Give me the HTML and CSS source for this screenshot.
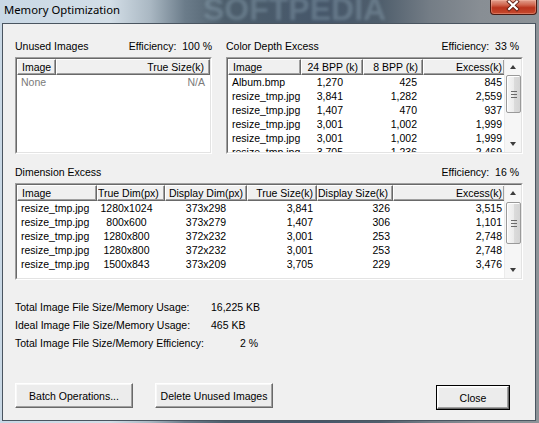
FILE: index.html
```html
<!DOCTYPE html>
<html lang="en">
<head>
    <meta charset="UTF-8">
    <title>Memory Optimization</title>
    <link rel="stylesheet" href="styles.css">
</head>
<body>
    <div class="window">
        <div class="titlebar">
            <span class="title">Memory Optimization</span>
            <span class="watermark">SOFTPEDIA</span>
            <button class="close-x" title="Close">
                <svg width="47" height="15" viewBox="0 0 47 15">
                    <path d="M19.5 1.5 L27.5 9 M27.5 1.5 L19.5 9" stroke="#5a1a10" stroke-width="4" stroke-linecap="square"/>
                    <path d="M19.5 1.5 L27.5 9 M27.5 1.5 L19.5 9" stroke="#fff" stroke-width="2.2" stroke-linecap="square"/>
                </svg>
            </button>
        </div>

        <div class="client">
            <div class="top-row">
                <section class="panel panel-unused">
                    <div class="panel-head">
                        <span>Unused Images</span>
                        <span>Efficiency:&nbsp; 100 %</span>
                    </div>
                    <div class="list list-top">
                        <div class="list-inner">
                            <div class="table">
                                <div class="row head cols-unused">
                                    <div class="hc pl5">Image</div>
                                    <div class="hc r pr5">True Size(k)</div>
                                </div>
                                <div class="row cols-unused muted">
                                    <div class="pl4">None</div>
                                    <div class="r pr5">N/A</div>
                                </div>
                            </div>
                        </div>
                    </div>
                </section>

                <section class="panel panel-color">
                    <div class="panel-head pad-r">
                        <span>Color Depth Excess</span>
                        <span>Efficiency:&nbsp; 33 %</span>
                    </div>
                    <div class="list list-top">
                        <div class="list-inner">
                            <div class="table">
                                <div class="row head cols-color">
                                    <div class="hc pl5">Image</div>
                                    <div class="hc r pr4">24 BPP (k)</div>
                                    <div class="hc r pr4">8 BPP (k)</div>
                                    <div class="hc r pr2">Excess(k)</div>
                                </div>
                                <div class="row cols-color">
                                    <div class="pl4">Album.bmp</div><div class="r pr20">1,270</div><div class="r pr6">425</div><div class="r pr3">845</div>
                                </div>
                                <div class="row cols-color">
                                    <div class="pl4">resize_tmp.jpg</div><div class="r pr20">3,841</div><div class="r pr6">1,282</div><div class="r pr3">2,559</div>
                                </div>
                                <div class="row cols-color">
                                    <div class="pl4">resize_tmp.jpg</div><div class="r pr20">1,407</div><div class="r pr6">470</div><div class="r pr3">937</div>
                                </div>
                                <div class="row cols-color">
                                    <div class="pl4">resize_tmp.jpg</div><div class="r pr20">3,001</div><div class="r pr6">1,002</div><div class="r pr3">1,999</div>
                                </div>
                                <div class="row cols-color">
                                    <div class="pl4">resize_tmp.jpg</div><div class="r pr20">3,001</div><div class="r pr6">1,002</div><div class="r pr3">1,999</div>
                                </div>
                                <div class="row cols-color">
                                    <div class="pl4">resize_tmp.jpg</div><div class="r pr20">3,705</div><div class="r pr6">1,236</div><div class="r pr3">2,469</div>
                                </div>
                            </div>
                            <div class="vscroll">
                                <div class="sb-btn"><span class="arrow-up"></span></div>
                                <div class="sb-thumb thumb-color"><span class="grip"></span></div>
                                <div class="sb-space"></div>
                                <div class="sb-btn"><span class="arrow-down"></span></div>
                            </div>
                        </div>
                    </div>
                </section>
            </div>

            <section class="panel panel-dim">
                <div class="panel-head pad-r">
                    <span>Dimension Excess</span>
                    <span>Efficiency:&nbsp; 16 %</span>
                </div>
                <div class="list list-dim">
                    <div class="list-inner">
                        <div class="table">
                            <div class="row head cols-dim">
                                <div class="hc pl5">Image</div>
                                <div class="hc r pr6">True Dim(px)</div>
                                <div class="hc c">Display Dim(px)</div>
                                <div class="hc r pr3">True Size(k)</div>
                                <div class="hc r pr4">Display Size(k)</div>
                                <div class="hc r pr2">Excess(k)</div>
                            </div>
                            <div class="row cols-dim">
                                <div class="pl4">resize_tmp.jpg</div><div class="c pr9">1280x1024</div><div class="c">373x298</div><div class="r pr4">3,841</div><div class="r pr3">326</div><div class="r pr3">3,515</div>
                            </div>
                            <div class="row cols-dim">
                                <div class="pl4">resize_tmp.jpg</div><div class="c pr9">800x600</div><div class="c">373x279</div><div class="r pr4">1,407</div><div class="r pr3">306</div><div class="r pr3">1,101</div>
                            </div>
                            <div class="row cols-dim">
                                <div class="pl4">resize_tmp.jpg</div><div class="c pr9">1280x800</div><div class="c">372x232</div><div class="r pr4">3,001</div><div class="r pr3">253</div><div class="r pr3">2,748</div>
                            </div>
                            <div class="row cols-dim">
                                <div class="pl4">resize_tmp.jpg</div><div class="c pr9">1280x800</div><div class="c">372x232</div><div class="r pr4">3,001</div><div class="r pr3">253</div><div class="r pr3">2,748</div>
                            </div>
                            <div class="row cols-dim">
                                <div class="pl4">resize_tmp.jpg</div><div class="c pr9">1500x843</div><div class="c">373x209</div><div class="r pr4">3,705</div><div class="r pr3">229</div><div class="r pr3">3,476</div>
                            </div>
                        </div>
                        <div class="vscroll">
                            <div class="sb-btn"><span class="arrow-up"></span></div>
                            <div class="sb-thumb thumb-dim"><span class="grip"></span></div>
                            <div class="sb-space"></div>
                            <div class="sb-btn"><span class="arrow-down"></span></div>
                        </div>
                    </div>
                </div>
            </section>

            <div class="totals">
                <span>Total Image File Size/Memory Usage:</span><span>16,225 KB</span>
                <span>Ideal Image File Size/Memory Usage:</span><span>465 KB</span>
                <span>Total Image File Size/Memory Efficiency:</span><span class="r">2 %</span>
            </div>

            <div class="buttons">
                <button class="btn btn-wide">Batch Operations...</button>
                <button class="btn btn-wide">Delete Unused Images</button>
                <button class="btn btn-close">Close</button>
            </div>
        </div>
    </div>
</body>
</html>
```

FILE: styles.css
```css
body {
    margin: 0;
    padding: 0;
    background: #8a9096;
}
.window {
    width: 539px;
    height: 423px;
    overflow: hidden;
    background: linear-gradient(to right, #c9d8e5 0, #d3dee7 110px, #aab8c3 150px, #6b7c8a 185px, #4d5e6c 225px, #46576a 320px, #4f5e6c 380px, #747d86 430px, #888e94 480px, #8d9398 539px);
    font-family: 'Liberation Sans', Arial, sans-serif;
    font-size: 10.5px;
    color: #000;
}
.titlebar {
    height: 23px;
    display: flex;
    align-items: flex-start;
    position: relative;
}
.title {
    font-family: 'Noto Sans', 'Open Sans', sans-serif;
    font-size: 11.3px;
    line-height: 20px;
    padding-left: 4px;
    color: #000;
    position: relative;
    z-index: 1;
}
.watermark {
    position: absolute;
    left: 203px;
    top: -9px;
    font-family: 'Liberation Sans', Arial, sans-serif;
    font-weight: bold;
    font-size: 32px;
    color: rgba(160, 182, 200, 0.32);
    filter: blur(1.4px);
}
.close-x {
    margin-left: auto;
    margin-right: 2px;
    width: 47px;
    height: 15px;
    padding: 0;
    border: 1px solid #4a1a12;
    border-top: none;
    border-radius: 0 0 4px 4px;
    background: linear-gradient(#e2a08f 0, #d0664f 35%, #b9341d 55%, #c64a2e 100%);
    box-shadow: inset 0 0 0 1px rgba(255, 200, 180, 0.35);
    display: flex;
    align-items: flex-start;
    justify-content: center;
    position: relative;
    z-index: 1;
}
.close-x svg {
    display: block;
    margin-left: -1px;
}
.client {
    box-sizing: border-box;
    margin-left: 2px;
    width: 534px;
    height: 398px;
    border: 1px solid #4a5560;
    background: #f0f0f0;
    padding: 0 12px;
}
.top-row {
    display: flex;
    gap: 14px;
    padding-top: 16px;
}
.panel-unused {
    width: 197px;
}
.panel-color {
    width: 297px;
}
.panel-dim {
    margin-top: 12px;
}
.panel-head {
    display: flex;
    justify-content: space-between;
    line-height: 13px;
    height: 13px;
    margin-bottom: 4px;
    white-space: nowrap;
}
.panel-head.pad-r {
    padding-right: 4px;
}

/* sunken list box */
.list {
    box-sizing: border-box;
    border: 1px solid;
    border-color: #a0a0a0 #fff #fff #a0a0a0;
}
.list-top {
    height: 97px;
}
.list-dim {
    height: 97px;
}
.list-inner {
    box-sizing: border-box;
    height: 100%;
    border: 1px solid;
    border-color: #696969 #e3e3e3 #e3e3e3 #696969;
    background: #fff;
    display: flex;
    overflow: hidden;
}
.table {
    flex: 1;
    overflow: hidden;
}
.row {
    display: grid;
    line-height: 14px;
    height: 14px;
    white-space: nowrap;
}
.row > div {
    overflow: hidden;
}
.row.head {
    height: 16px;
    background: #f0f0f0;
}
.hc {
    box-sizing: border-box;
    height: 16px;
    border: 1px solid;
    border-color: #fff #696969 #696969 #fff;
    box-shadow: inset -1px -1px 0 #a0a0a0;
}
.muted {
    color: #7a7a7a;
}
.cols-unused {
    grid-template-columns: 39px 1fr;
}
.cols-color {
    grid-template-columns: 73px 62px 60px 82px;
}
.cols-dim {
    grid-template-columns: 80px 68px 82px 70px 76px 112px;
}
.r { text-align: right; }
.c { text-align: center; }
.pl4 { padding-left: 4px; }
.pl5 { padding-left: 4px; }
.pr2 { padding-right: 2px; }
.pr3 { padding-right: 3px; }
.pr4 { padding-right: 4px; }
.pr5 { padding-right: 5px; }
.pr6 { padding-right: 6px; }
.pr9 { padding-right: 9px; }
.pr20 { padding-right: 20px; }

/* vista scroll bar */
.vscroll {
    width: 16px;
    display: flex;
    flex-direction: column;
    background: #f6f6f6;
    border-left: 1px solid #ececec;
}
.sb-btn {
    height: 16px;
    flex: none;
    display: flex;
    align-items: center;
    justify-content: center;
}
.arrow-up {
    width: 0;
    height: 0;
    border-left: 3.5px solid transparent;
    border-right: 3.5px solid transparent;
    border-bottom: 4px solid #3c3c3c;
}
.arrow-down {
    width: 0;
    height: 0;
    border-left: 3.5px solid transparent;
    border-right: 3.5px solid transparent;
    border-top: 4px solid #3c3c3c;
}
.sb-thumb {
    box-sizing: border-box;
    flex: none;
    margin: 0 0 0 1px;
    border: 1px solid #9a9a9a;
    border-radius: 2px;
    background: linear-gradient(to right, #f7f7f7 0, #ececec 50%, #dcdcdc 51%, #d4d4d4 100%);
    box-shadow: inset 1px 1px 0 #fff;
    display: flex;
    align-items: center;
    justify-content: center;
}
.thumb-color {
    height: 38px;
}
.thumb-dim {
    height: 42px;
    margin-top: 1px;
}
.grip {
    width: 6px;
    height: 5px;
    border-top: 1px solid #6a6a6a;
    border-bottom: 1px solid #6a6a6a;
    background: linear-gradient(transparent 2px, #6a6a6a 2px, #6a6a6a 3px, transparent 3px);
}
.sb-space {
    flex: 1;
}

.totals {
    margin-top: 18px;
    display: grid;
    grid-template-columns: 196px 47px;
    line-height: 18px;
    white-space: nowrap;
}

.buttons {
    margin-top: 31px;
    display: flex;
    align-items: flex-start;
}
.btn {
    box-sizing: border-box;
    font-family: 'Liberation Sans', Arial, sans-serif;
    font-size: 10.5px;
    color: #000;
    background: #ececec;
    border: 1px solid;
    border-color: #fff #696969 #696969 #fff;
    box-shadow: inset -1px -1px 0 #a0a0a0, inset 1px 1px 0 #f8f8f8;
    padding: 0;
}
.btn-wide {
    width: 118px;
    height: 25px;
    margin-right: 22px;
}
.btn-close {
    width: 72px;
    height: 23px;
    margin-top: 3px;
    margin-left: auto;
    margin-right: 14px;
    outline: 1px solid #000;
}
```
